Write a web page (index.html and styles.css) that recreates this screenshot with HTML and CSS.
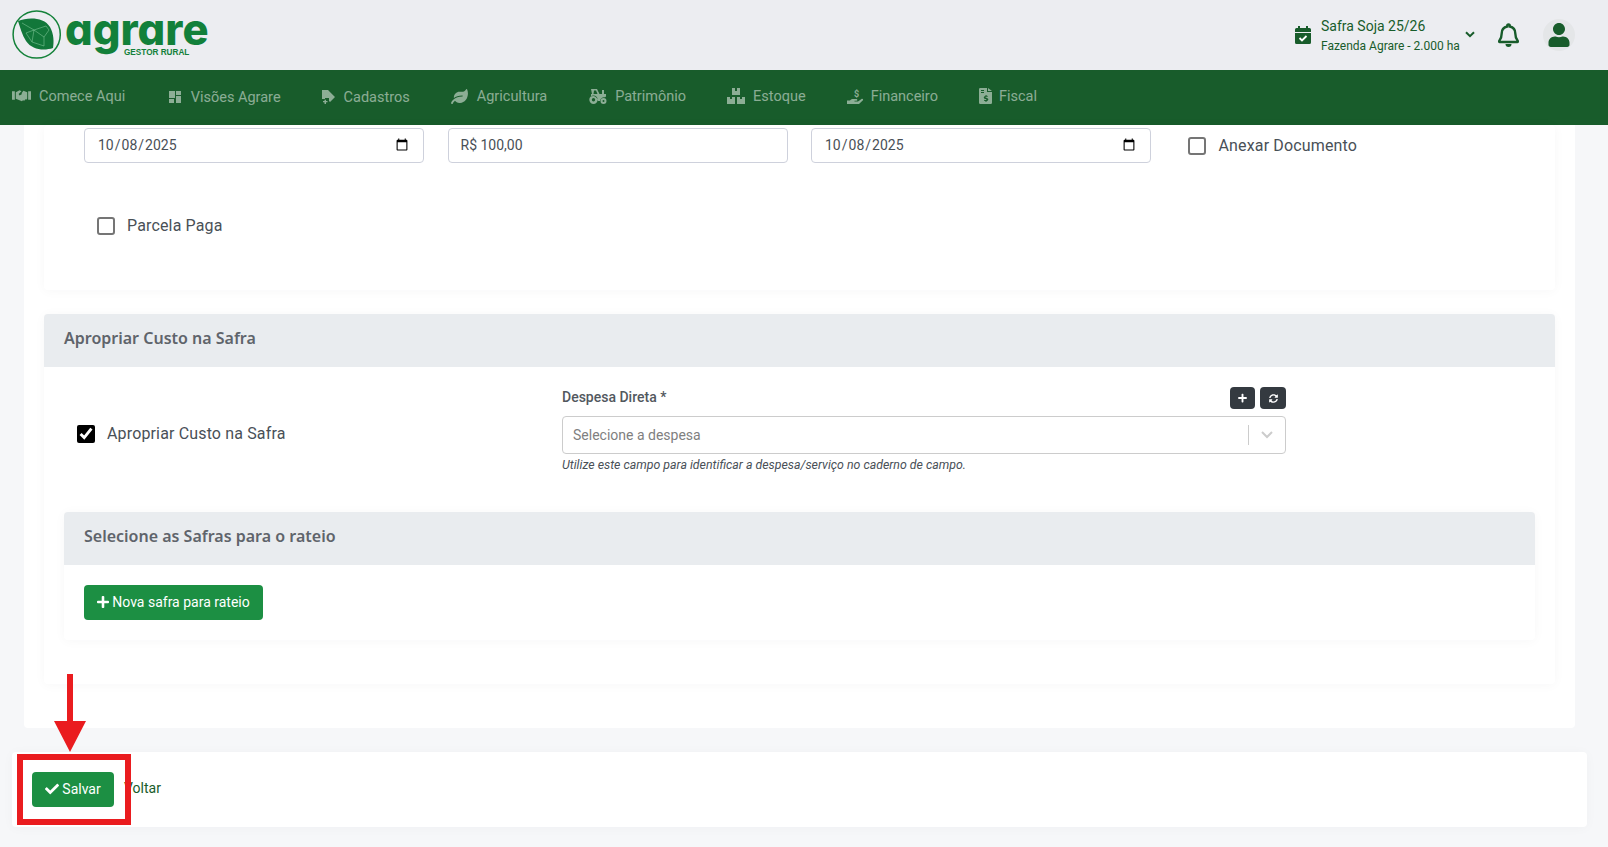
FILE: index.html
```html
<!DOCTYPE html>
<html lang="pt-BR">
<head>
<meta charset="utf-8">
<title>Agrare</title>
<link rel="stylesheet" href="styles.css">
</head>
<body>
<header class="top">
  <div class="logo">
    <svg class="logo-mark" viewBox="0 0 50 50" width="50" height="50">
      <circle cx="24.7" cy="24.5" r="23.6" fill="none" stroke="#14823a" stroke-width="1.5"/>
      <path d="M6 11C16 7 32 7 38 17C42 24 42 32 41 38C32 41 20 40 14 31C10 25 8 17 6 11Z" fill="#12773a"/>
      <path d="M10 13L22 20L34 16M22 20L20 32L32 36M22 20L32 27L37 20M32 27L32 36M14 23L22 20M20 32L14 23M34 16L37 20" fill="none" stroke="#8fd0a4" stroke-width=".5"/>
    </svg>
    <span class="logo-word">agrare</span>
    <span class="logo-sub">GESTOR RURAL</span>
  </div>
  <div class="top-right">
    <svg class="cal" viewBox="0 0 16 18" width="16" height="18">
      <path d="M3 0h2v2h6V0h2v2h1.5A1.5 1.5 0 0 1 16 3.5V6H0V3.5A1.5 1.5 0 0 1 1.500 2H3zM0 7h16v9.500a1.500 1.500 0 0 1-1.500 1.500h-13A1.500 1.500 0 0 1 0 16.500z" fill="#185c2b"/>
      <path d="M4.500 12l2.500 2.500 4.500-4.500" fill="none" stroke="#fff" stroke-width="1.800"/>
    </svg>
    <div class="safra">
      <div class="safra-name">Safra Soja 25/26</div>
      <div class="safra-farm">Fazenda Agrare - 2.000 ha</div>
    </div>
    <svg class="chev" viewBox="0 0 10 7" width="10" height="7"><path d="M1 1.200l4 4 4-4" fill="none" stroke="#185c2b" stroke-width="2"/></svg>
    <svg class="bell" viewBox="0 0 21 24" width="21" height="24">
      <path d="M10.500 1.500a1.300 1.300 0 0 1 1.300 1.300v.7c3.500.7 5.500 3.500 5.500 7 0 4 .8 5.500 2.500 7.500.4.500 0 1-.5 1H1.700c-.5 0-.9-.5-.5-1 1.700-2 2.500-3.500 2.500-7.500 0-3.500 2-6.300 5.500-7v-.7a1.300 1.300 0 0 1 1.300-1.300z" fill="none" stroke="#185c2b" stroke-width="2.400"/>
      <path d="M7.500 21h6a3 3 0 0 1-6 0z" fill="#185c2b"/>
    </svg>
    <div class="avatar">
      <svg viewBox="0 0 448 512" width="24" height="24"><path fill="#185c2b" d="M224 256c70.700 0 128-57.300 128-128S294.700 0 224 0 96 57.300 96 128s57.300 128 128 128zm89.600 32h-16.700c-22.200 10.200-46.900 16-72.900 16s-50.600-5.800-72.900-16h-16.700C60.200 288 0 348.200 0 422.400V464c0 26.500 21.500 48 48 48h352c26.500 0 48-21.500 48-48v-41.600c0-74.200-60.200-134.400-134.400-134.400z"/></svg>
    </div>
  </div>
</header>

<nav class="menu">
  <a class="menu-item">
    <svg viewBox="0 0 20 14" width="19" height="14"><path d="M0 2h3v9H0zM17 2h3v9h-3zM4 3l4-2 2 1-3 3 1 1.500 3-2 5 5-1 1.500-1-.5-1 1.500-1.500-.5-1 1L4 10zM12 1.500l4 1.500v6.500l-.8.6L11 5.500 10 4z"/></svg>
    Comece Aqui
  </a>
  <a class="menu-item menu-low menu-second gap-10">
    <svg viewBox="0 0 12 12" width="12" height="12"><path d="M0 0h6v7H0zM7 0h5v4H7zM0 8h5v4H0zM7 5h5v7H7z"/></svg>
    Visões Agrare
  </a>
  <a class="menu-item menu-low gap-9">
    <svg viewBox="0 0 13 15" width="13" height="15"><path d="M0 0h6l7 7-5 5-1-1V8H3v1H0z"/><path d="M1 11h1.500V9.800h1.500V11h1.500v1.300H4V14H2.500v-1.700H1z"/></svg>
    Cadastros
  </a>
  <a class="menu-item gap-9">
    <svg viewBox="0 0 576 512" width="17" height="15"><path d="M546.200 9.700c-5.600-12.500-21.600-13-28.300-1.200C486.900 62.400 431.400 96 368 96h-80C182 96 96 182 96 288c0 7 .8 13.700 1.500 20.500C161.300 262.800 253.400 224 384 224c8.800 0 16 7.200 16 16s-7.200 16-16 16C132.600 256 26 410.100 2.400 468c-6.600 16.300 1.200 34.900 17.500 41.600 16.400 6.800 35-1.100 41.800-17.300 1.500-3.600 20.900-47.900 71.900-90.600 32.400 43.900 94 85.800 174.900 77.200C465.500 467.500 576 326.700 576 154.300c0-50.200-10.800-102.200-29.800-144.600z"/></svg>
    Agricultura
  </a>
  <a class="menu-item gap-7">
    <svg viewBox="0 0 20 16" width="20" height="16"><path fill-rule="evenodd" d="M3 1h6l2.500 5H14V2h2v4h2v2.500l-1 .8a4 4 0 0 0-5 3.700H10a5 5 0 0 0-7-4.500V6h1zM6 2.500L5.500 6h4L8 2.500zM5.500 7.500a4.200 4.200 0 1 0 0 8.400 4.200 4.200 0 0 0 0-8.400zm0 2.500a1.700 1.700 0 1 1 0 3.400 1.700 1.700 0 0 1 0-3.400zM15.500 10a3 3 0 1 0 0 6 3 3 0 0 0 0-6zm0 2a1 1 0 1 1 0 2 1 1 0 0 1 0-2z"/></svg>
    Patrimônio
  </a>
  <a class="menu-item">
    <svg viewBox="0 0 18 16" width="18" height="16"><path d="M5 0h3v3h2V0h3v7H5zM0 9h3v2h2V9h3v7H0zM10 9h3v2h2V9h3v7h-8z"/></svg>
    Estoque
  </a>
  <a class="menu-item gap-7">
    <svg viewBox="0 0 17 17" width="17" height="17"><text x="7" y="8.500" class="icon-dollar">$</text><path d="M0 12.500h3c1-1.200 2-1.500 3.500-1.500h3c1 0 1.300 1.800 0 1.800H7.500v.7H11l3.500-2.500c1.200-.7 2.200.7 1.200 1.600L12 16H0z"/></svg>
    Financeiro
  </a>
  <a class="menu-item gap-7">
    <svg viewBox="0 0 13 16" width="13" height="16"><path fill-rule="evenodd" d="M0 1.200A1.200 1.200 0 0 1 1.200 0H8v4h5v10.800a1.200 1.200 0 0 1-1.200 1.200H1.200A1.200 1.200 0 0 1 0 14.800zM9 0l4 3H9zM2 2v1h3V2zM2 4v1h3V4zM6.500 7v.9C5.400 8 4.800 8.700 4.800 9.500c0 1.800 2.700 1.300 2.700 2.200 0 .6-1.400.4-2.200.1l-.3 1c.5.2 1 .3 1.500.3v.9h1v-1c1-.2 1.800-.8 1.800-1.600 0-1.800-2.800-1.300-2.800-2.200 0-.5 1.100-.4 1.900-.1l.3-1c-.4-.2-.8-.3-1.200-.3V7z"/></svg>
    Fiscal
  </a>
</nav>

<main class="page">
  <div class="outer">
    <section class="card card-top">
      <div class="field-row">
        <input class="field" type="date" value="2025-10-08">
        <input class="field" type="text" value="R$ 100,00">
        <input class="field" type="date" value="2025-10-08">
        <label class="check check-doc"><input type="checkbox"><span>Anexar Documento</span></label>
      </div>
      <label class="check check-paid"><input type="checkbox"><span>Parcela Paga</span></label>
    </section>

    <section class="card card-cost">
      <h2 class="card-title title-cost">Apropriar Custo na Safra</h2>
      <div class="cost-row">
        <label class="check check-cost"><input type="checkbox" checked><span>Apropriar Custo na Safra</span></label>
        <div class="expense">
          <div class="expense-head">
            <span class="expense-label">Despesa Direta *</span>
            <button class="mini"><svg viewBox="0 0 448 512" width="9" height="10"><path d="M416 208H272V64c0-17.670-14.330-32-32-32h-32c-17.670 0-32 14.330-32 32v144H32c-17.670 0-32 14.330-32 32v32c0 17.670 14.330 32 32 32h144v144c0 17.670 14.330 32 32 32h32c17.670 0 32-14.330 32-32V304h144c17.670 0 32-14.330 32-32v-32c0-17.670-14.330-32-32-32z"/></svg></button>
            <button class="mini"><svg viewBox="0 0 512 512" width="9" height="9"><path d="M370.720 133.280C339.458 104.008 298.888 87.962 255.848 88c-77.458.068-144.328 53.178-162.791 126.850-1.344 5.363-6.122 9.150-11.651 9.150H24.103c-7.498 0-13.194-6.807-11.807-14.176C33.933 94.924 134.813 8 256 8c66.448 0 126.791 26.136 171.315 68.685L463.030 40.970C478.149 25.851 504 36.559 504 57.941V192c0 13.255-10.745 24-24 24H345.941c-21.382 0-32.090-25.851-16.971-40.971l41.750-41.749zM32 296h134.059c21.382 0 32.090 25.851 16.971 40.971l-41.750 41.750c31.262 29.273 71.835 45.319 114.876 45.280 77.418-.07 144.315-53.144 162.787-126.849 1.344-5.363 6.122-9.150 11.651-9.150h57.304c7.498 0 13.194 6.807 11.807 14.176C478.067 417.076 377.187 504 256 504c-66.448 0-126.791-26.136-171.315-68.685L48.970 471.030C33.851 486.149 8 475.441 8 454.059V320c0-13.255 10.745-24 24-24z"/></svg></button>
          </div>
          <div class="select">
            <span class="select-ph">Selecione a despesa</span>
            <span class="select-sep"></span>
            <svg class="select-chev" viewBox="0 0 12 8" width="12" height="8"><path d="M1 1l5 5 5-5" fill="none" stroke="#ccc" stroke-width="2"/></svg>
          </div>
          <p class="help">Utilize este campo para identificar a despesa/serviço no caderno de campo.</p>
        </div>
      </div>
      <section class="card card-sub">
        <h3 class="card-title title-sub">Selecione as Safras para o rateio</h3>
        <div class="sub-body">
          <button class="btn btn-new"><svg viewBox="0 0 448 512" width="12" height="14"><path d="M416 208H272V64c0-17.670-14.330-32-32-32h-32c-17.670 0-32 14.330-32 32v144H32c-17.670 0-32 14.330-32 32v32c0 17.670 14.330 32 32 32h144v144c0 17.670 14.330 32 32 32h32c17.670 0 32-14.330 32-32V304h144c17.670 0 32-14.330 32-32v-32c0-17.670-14.330-32-32-32z"/></svg>Nova safra para rateio</button>
        </div>
      </section>
    </section>
  </div>

  <footer class="actions">
    <button class="btn btn-save"><svg viewBox="0 0 512 512" width="14" height="14"><path d="M173.898 439.404l-166.400-166.400c-9.997-9.997-9.997-26.206 0-36.204l36.203-36.204c9.997-9.998 26.207-9.998 36.204 0L192 312.690 432.095 72.596c9.997-9.997 26.207-9.997 36.204 0l36.203 36.204c9.997 9.997 9.997 26.206 0 36.204l-294.400 294.401c-9.998 9.997-26.207 9.997-36.204-.001z"/></svg>Salvar</button>
    <a class="back">Voltar</a>
  </footer>
</main>

<div class="mark-box"></div>
<svg class="mark-arrow" viewBox="0 0 32 78" width="32" height="78"><path d="M13 0h6v47h13L16 78 0 47h13z" fill="#ea1c1f"/></svg>
</body>
</html>
```

FILE: styles.css
```css
* { box-sizing: border-box; }
html, body { margin: 0; height: 100%; overflow: hidden; }
body { background: #f6f7f9; font-family: Roboto, "Liberation Sans", sans-serif; color: #495057; font-size: 14px; position: relative; }

.top { height: 70px; background: #ecedf1; display: flex; align-items: center; padding: 0 33px 0 12px; }
.logo { position: relative; display: flex; align-items: flex-start; height: 50px; }
.logo-mark { display: block; }
.logo-word { font-family: Inter, "Liberation Sans", sans-serif; font-feature-settings: "cv11"; font-weight: 800; font-size: 43.500px; line-height: 32px; letter-spacing: 0; color: #12803a; margin: 3px 0 0 3px; }
.logo-sub { position: absolute; left: 112px; top: 38px; font: 700 8.200px/9px "Liberation Sans", sans-serif; color: #12803a; white-space: nowrap; }

.top-right { margin-left: auto; display: flex; align-items: center; color: #185c2b; }
.cal { margin-right: 10px; }
.safra { width: 138px; white-space: nowrap; }
.safra-name { font-size: 14px; line-height: 20px; }
.safra-farm { font-size: 12px; line-height: 18px; padding-top: 1px; }
.chev { margin: 0 0 2px 6px; }
.bell { margin-left: 23px; }
.avatar { width: 32px; height: 32px; border-radius: 50%; background: #e4e6e8; display: flex; align-items: center; justify-content: center; margin-left: 24px; }

.menu { height: 55px; background: #185c2b; display: flex; align-items: center; gap: 41px; padding: 0 0 3px 12px; }
.menu-item { display: flex; align-items: center; gap: 8px; color: rgba(255,255,255,.5); font-size: 14.500px; white-space: nowrap; }
.menu-item svg { fill: rgba(255,255,255,.5); flex: none; }
.menu-low { margin-top: 2px; }
.menu-second { margin-left: 2.500px; }
.gap-10 { gap: 10px; }
.gap-9 { gap: 9px; }
.gap-7 { gap: 7px; }
.icon-dollar { font: 700 9px Roboto, sans-serif; }

.page { padding: 0 21px 20px 12px; }
.outer { background: #fff; margin: 0 12px; height: 603px; padding: 0 20px 0 20px; border-radius: 0 0 4px 4px; }
.card { background: #fff; border-radius: 4px; box-shadow: 0 1px 12px rgba(30,40,60,.035); }
.card-top { height: 165px; padding-top: 3px; margin-bottom: 24px; }
.field-row { display: flex; align-items: center; gap: 23.500px; padding-left: 40px; }
.field { width: 340px; height: 35px; border: 1px solid #ced1dc; border-radius: 4px; padding: 0 12px 1px; font: 14px Roboto, sans-serif; color: #495057; background: #fff; flex: none; }
.check { display: flex; align-items: center; font-size: 16px; letter-spacing: .15px; color: #495057; white-space: nowrap; }
.check input { width: 18px; height: 18px; margin: 0 12px 0 0; accent-color: #000; flex: none; }
.check input:not(:checked) { appearance: none; border: 2px solid #757575; border-radius: 3px; background: #fff; }
.check-doc { margin-left: 13px; }
.check-doc input { margin-right: 13px; }
.check-paid { margin: 53px 0 0 53px; }

.card-cost { height: 370px; }
.card-title { margin: 0; background: #e9ecef; height: 53px; padding: 0 20px 5px; display: flex; align-items: center; font: 600 16px "Noto Sans", Roboto, sans-serif; color: #5f646b; border-radius: 4px 4px 0 0; }
.cost-row { display: flex; align-items: flex-start; padding: 20px 0 0 33px; height: 145px; }
.check-cost { width: 485px; height: 93px; }
.expense { width: 724px; }
.expense-head { display: flex; align-items: center; height: 22px; gap: 5px; margin-bottom: 7px; }
.expense-label { font-weight: 500; font-size: 14px; margin: 0 auto 2px 0; color: #52585e; }
.mini { width: 25px; height: 22px; border: 0; border-radius: 4px; background: #343a40; padding: 0; display: flex; align-items: center; justify-content: center; }
.mini:last-child { width: 26px; }
.mini svg { fill: #fff; }
.select { height: 38px; border: 1px solid #ccc; border-radius: 4px; display: flex; align-items: center; padding-left: 10px; background: #fff; }
.select-ph { flex: 1; color: #808080; font-size: 14px; }
.select-sep { width: 1px; height: 20px; background: #ccc; }
.select-chev { margin: 0 12px; }
.help { margin: 4px 0 0; font-size: 12.350px; font-style: italic; line-height: 14px; color: #495057; }

.card-sub { margin: 0 20px; height: 128px; }
.sub-body { padding: 20px; }
.btn { height: 35px; border: 0; border-radius: 4px; background: #1c8f43; color: #fff; font: 14px Roboto, sans-serif; display: flex; align-items: center; justify-content: center; gap: 3px; padding: 0 0 1px; }
.btn svg { fill: #fff; }
.btn-new { width: 179px; }
.btn-save { width: 82px; }

.actions { height: 75px; margin-top: 24px; background: #fff; border-radius: 4px; display: flex; align-items: center; padding-left: 20px; box-shadow: 0 1px 12px rgba(30,40,60,.03); }
.back { color: #185c2b; margin: 0 0 3px 10px; font-size: 14px; }

.mark-box { position: absolute; left: 17px; top: 754px; width: 114px; height: 71px; border: 6px solid #ea1c1f; }
.mark-arrow { position: absolute; left: 54px; top: 674px; }
```
